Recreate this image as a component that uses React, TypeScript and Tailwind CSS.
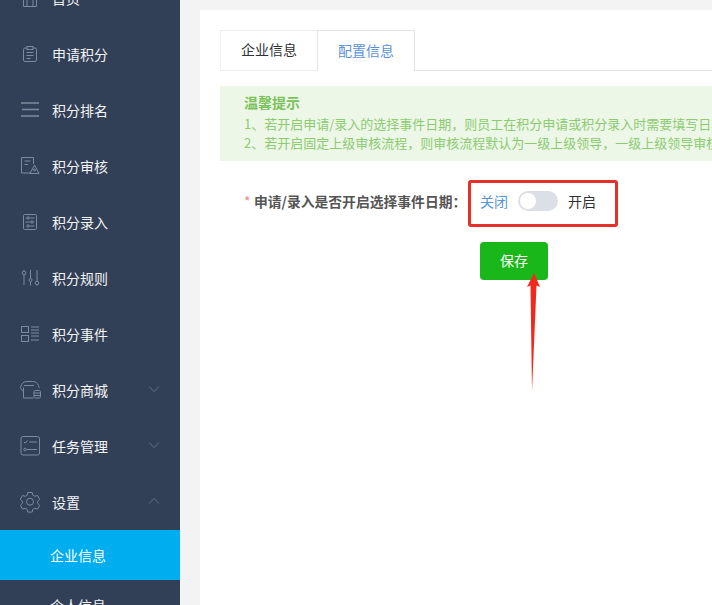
const S = "#7d8a9e";
const Icon = ({ children }: { children: React.ReactNode }) => (
  <svg width="24" height="24" viewBox="0 0 24 24" fill="none" stroke={S} strokeWidth="1" className="block">{children}</svg>
);
const icons: Record<string, React.ReactNode> = {
  home: <Icon><path d="M5.500 6.500v14h13v-14M5.500 6.500h13M9 20.500v-7h6v7M9 9.500h6" /></Icon>,
  apply: <Icon><rect x="5.500" y="6" width="13" height="13.500" rx="1.500" /><rect x="9" y="4.500" width="6" height="3" fill="#324057" /><path d="M8.500 10.500h7M8.500 13.500h7M8.500 16.500h4" /></Icon>,
  rank: <Icon><path d="M3 5h18M4 11.500h17M3 18h18" strokeWidth="1.300" /></Icon>,
  audit: <Icon><path d="M15.500 10V3.500H3.500v15.500h9" /><path d="M6.500 7h6M6.500 10.500h3.500" /><path d="M16.500 11l4.500 8.500h-9z" /><circle cx="16.500" cy="16" r="1" /></Icon>,
  entry: <Icon><rect x="5.500" y="4.500" width="13" height="15" rx="1" /><circle cx="10" cy="8" r="1.200" /><path d="M11.500 8h5M7.500 8h1" /><circle cx="14" cy="12" r="1.200" /><path d="M7.500 12h5M15.500 12h1" /><circle cx="10" cy="16" r="1.200" /><path d="M11.500 16h5" /></Icon>,
  rule: <Icon><path d="M6 9v10M6 4v1M12.500 4v8M12.500 15.500v4M19 4v11M19 18.500v1" /><circle cx="6" cy="7" r="1.800" /><circle cx="12.500" cy="14" r="1.500" /><circle cx="19" cy="17" r="1.800" /></Icon>,
  event: <Icon><rect x="3.500" y="4.500" width="7" height="6" /><rect x="3.500" y="13.500" width="7" height="6" /><path d="M13 5h8M13 8h8M13 11h8M13 14h8M13 18h8" strokeWidth="1.200" /></Icon>,
  shop: <Icon><path d="M5 13c-2-1-2.800-3-2-5 .8-2.500 2.500-4.500 6-4.500h5.500c3 0 5 1.500 6 4 .4 1 .5 1.800.5 2.500" /><path d="M5.500 9.500v10.500h10M6 7.500h10" /><rect x="16" y="12.500" width="6.500" height="7.500" rx="1.200" /><path d="M16 15h6.500M16 17.500h6.500" /></Icon>,
  task: <Icon><rect x="3" y="2.500" width="18.500" height="18.500" rx="2" /><path d="M6 8l1.200 1.200L9.500 6.500M11 8h8M9 15.500h10" /><circle cx="7" cy="15.500" r="1.300" /></Icon>,
  gear: <Icon><path d="M9.800 2.500h4.400l.7 2.800 1.800 1 2.800-.8 2.200 3.800-2.100 2v2l2.100 2-2.200 3.800-2.800-.8-1.800 1-.7 2.800H9.800l-.7-2.800-1.800-1-2.800.8-2.200-3.800 2.100-2v-2l-2.100-2 2.200-3.800 2.800.8 1.800-1z" /><circle cx="12" cy="11.700" r="3.500" /></Icon>,
};
const Chevron = ({ up }: { up?: boolean }) => (
  <svg width="12" height="8" viewBox="0 0 12 8" fill="none" stroke="#67748a" strokeWidth="1" className="absolute right-[20px] top-[23px]">
    <path d={up ? "M1 6.500L6 1.500l5 5" : "M1 1.500l5 5 5-5"} />
  </svg>
);
const items = [
  ["home", "首页"], ["apply", "申请积分"], ["rank", "积分排名"], ["audit", "积分审核"], ["entry", "积分录入"],
  ["rule", "积分规则"], ["event", "积分事件"], ["shop", "积分商城", "down"], ["task", "任务管理", "down"], ["gear", "设置", "up"],
];
export default function App() {
  return (
    <div className="flex h-[605px] w-[712px] overflow-hidden bg-[#f3f3f3] text-[14px]" style={{ fontFamily: '"Noto Sans CJK SC", "Noto Sans", sans-serif' }}>
      <aside className="w-[180px] shrink-0 bg-[#324057] text-[#f2f4f6]">
        <div className="-mt-[30px]">
          {items.map(([icon, label, ch]) => (
            <div key={label} className="relative flex h-[56px] items-center pl-[18px]">
              <span className="flex w-[34px] shrink-0">{icons[icon]}</span>
              <span className="leading-none">{label}</span>
              {ch && <Chevron up={ch === "up"} />}
            </div>
          ))}
          <div className="flex h-[50px] items-center bg-[#00aeef] pl-[50px] text-white">企业信息</div>
          <div className="flex h-[50px] items-center pl-[50px]">个人信息</div>
        </div>
      </aside>
      <main className="ml-[20px] mt-[10px] min-w-0 flex-1 bg-white pl-[20px] pt-[20px]">
        <div className="flex h-[41px] border-b border-[#e2e4e8]">
          <div className="flex h-[41px] w-[98px] items-center justify-center border border-[#eceef0] pb-[2px] text-[#303133]">企业信息</div>
          <div className="-ml-px flex h-[41px] w-[98px] items-center justify-center border border-b-0 border-[#e2e4e8] bg-white pb-[2px] text-[#5b93d8]">配置信息</div>
        </div>
        <div className="mt-[15px] h-[75px] overflow-hidden whitespace-nowrap bg-[#edf7e8] pl-[24px] pt-[6px] text-[13px] text-[#8ccb70]">
          <div className="h-[22px] text-[14px] font-bold leading-[21px] text-[#7ac25a]">温馨提示</div>
          <div className="h-[20px] leading-[20px]">1、若开启申请/录入的选择事件日期，则员工在积分申请或积分录入时需要填写日期</div>
          <div className="h-[18px] leading-[18px]">2、若开启固定上级审核流程，则审核流程默认为一级上级领导，一级上级领导审核</div>
        </div>
        <div className="relative">
          <div className="mt-[30px] flex h-[20px] items-center">
            <span className="w-[25px] pl-[24px] text-[#f08a8a]">*</span>
            <span className="w-[235px] whitespace-nowrap pl-[9px] text-[13.800px] font-bold text-[#555]">申请/录入是否开启选择事件日期：</span>
            <span className="text-[#5b93d8]">关闭</span>
            <span className="relative ml-[10px] h-[20px] w-[40px] rounded-full bg-[#dcdfe6]">
              <span className="absolute left-[2px] top-[2px] h-[16px] w-[16px] rounded-full bg-white" />
            </span>
            <span className="ml-[10px] text-[#303133]">开启</span>
          </div>
          <div className="absolute left-[248px] top-[-11px] h-[47px] w-[150px] rounded-[3px] border-[3px] border-[#e8302a]" />
          <div className="ml-[260px] mt-[31px] flex h-[38px] w-[68px] items-center justify-center rounded-[4px] bg-[#1ab71a] pb-[2px] text-white">保存</div>
          <svg width="20" height="122" viewBox="0 0 20 122" className="absolute left-[303px] top-[80px]">
            <path d="M11 2L17 16 13.500 14.500 9 120 7.500 14.500 4 16z" fill="#f0291c" />
          </svg>
        </div>
      </main>
    </div>
  );
}
